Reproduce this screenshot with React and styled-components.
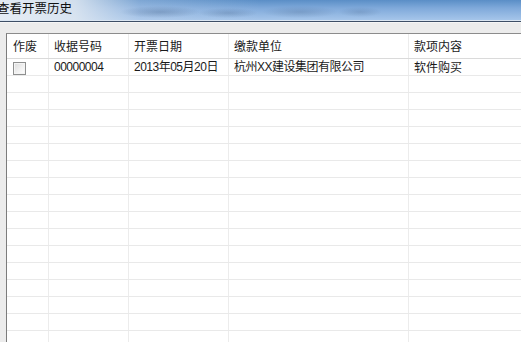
import styled, { createGlobalStyle } from "styled-components";

const GlobalStyle = createGlobalStyle`
    html, body {
        margin: 0;
        padding: 0;
        overflow: hidden;
        background: #ececec;
    }
    * {
        box-sizing: border-box;
    }
`;

const COLUMNS = "42px 80px 100px 180px 1fr";

const Window = styled.div`
    width: 521px;
    height: 342px;
    display: flex;
    flex-direction: column;
    overflow: hidden;
    font-family: Tahoma, "Liberation Sans", "Noto Sans CJK SC", sans-serif;
    font-size: 12px;
    color: #1a1a1a;
`;

const TitleBar = styled.div`
    height: 21px;
    flex-shrink: 0;
    display: flex;
    align-items: center;
    padding-bottom: 3px;
    background:
        radial-gradient(ellipse 40px 6px at 160px 12px, rgba(70, 100, 140, 0.35), transparent),
        radial-gradient(ellipse 30px 5px at 228px 13px, rgba(70, 100, 140, 0.3), transparent),
        radial-gradient(ellipse 38px 6px at 300px 12px, rgba(70, 100, 140, 0.28), transparent),
        radial-gradient(ellipse 22px 5px at 360px 12px, rgba(70, 100, 140, 0.25), transparent),
        linear-gradient(to right, rgba(232, 238, 245, 0.97) 0, rgba(222, 231, 241, 0.9) 75px, rgba(190, 210, 235, 0.35) 140px, rgba(170, 200, 235, 0) 260px),
        linear-gradient(to bottom, #5a8ec6 0, #7fa9da 8px, #a5c5ea 20px);
    border-bottom: 1px solid #dbe6f2;
`;

const Title = styled.span`
    margin-left: -3px;
    font-family: "Noto Sans CJK SC", sans-serif;
    font-size: 12.5px;
    line-height: 1;
    color: #111;
`;

const TitleEdge = styled.div`
    height: 2px;
    flex-shrink: 0;
    background: #3e4f66;
    border-bottom: 1px solid #f6f6f6;
`;

const Body = styled.div`
    flex: 1;
    display: flex;
    padding: 10px 0 0 6px;
    min-height: 0;
`;

const ListView = styled.div`
    flex: 1;
    display: flex;
    flex-direction: column;
    background: #fff;
    border-left: 1px solid #7c7c7c;
    border-top: 1px solid #8c8c8c;
    overflow: hidden;
`;

const Row = styled.div`
    display: grid;
    grid-template-columns: ${COLUMNS};
    height: ${p => (p.$header ? 25 : 17)}px;
    flex-shrink: 0;
    border-bottom: 1px solid ${p => (p.$header ? "#dadada" : "#e9e9e9")};
`;

const Cell = styled.div`
    display: flex;
    align-items: center;
    padding-left: ${p => (p.$first ? 6 : 5)}px;
    border-right: 1px solid #ececec;
    white-space: nowrap;
    overflow: hidden;
    font-family: ${p => (p.$num ? 'Tahoma, "Liberation Sans", "Noto Sans CJK SC", sans-serif' : '"Noto Sans CJK SC", sans-serif')};
    font-size: 12px;
    letter-spacing: ${p => (p.$num ? "-0.5px" : "0")};
    line-height: 1;
    &:last-child {
        border-right: none;
    }
`;

const Check = styled.span`
    width: 13px;
    height: 13px;
    margin-top: 2px;
    border: 1px solid #8e8f8f;
    background: linear-gradient(135deg, #dcdcdc 0, #f2f2f2 60%, #ffffff 100%);
    box-shadow: inset 0 0 0 1px #f4f4f4;
`;

const headers = ["作废", "收据号码", "开票日期", "缴款单位", "款项内容"];

const records = [
    { no: "00000004", date: "2013年05月20日", payer: "杭州XX建设集团有限公司", item: "软件购买" },
];

const EMPTY_ROWS = 16;

export default function App() {
    return (
        <>
            <GlobalStyle />
            <Window>
                <TitleBar>
                    <Title>查看开票历史</Title>
                </TitleBar>
                <TitleEdge />
                <Body>
                    <ListView>
                        <Row $header>
                            {headers.map((h, i) => (
                                <Cell key={h} $first={i === 0}>{h}</Cell>
                            ))}
                        </Row>
                        {records.map(r => (
                            <Row key={r.no}>
                                <Cell $first><Check /></Cell>
                                <Cell $num>{r.no}</Cell>
                                <Cell $num>{r.date}</Cell>
                                <Cell $num>{r.payer}</Cell>
                                <Cell>{r.item}</Cell>
                            </Row>
                        ))}
                        {Array.from({ length: EMPTY_ROWS }).map((_, i) => (
                            <Row key={"e" + i}>
                                <Cell /><Cell /><Cell /><Cell /><Cell />
                            </Row>
                        ))}
                    </ListView>
                </Body>
            </Window>
        </>
    );
}
